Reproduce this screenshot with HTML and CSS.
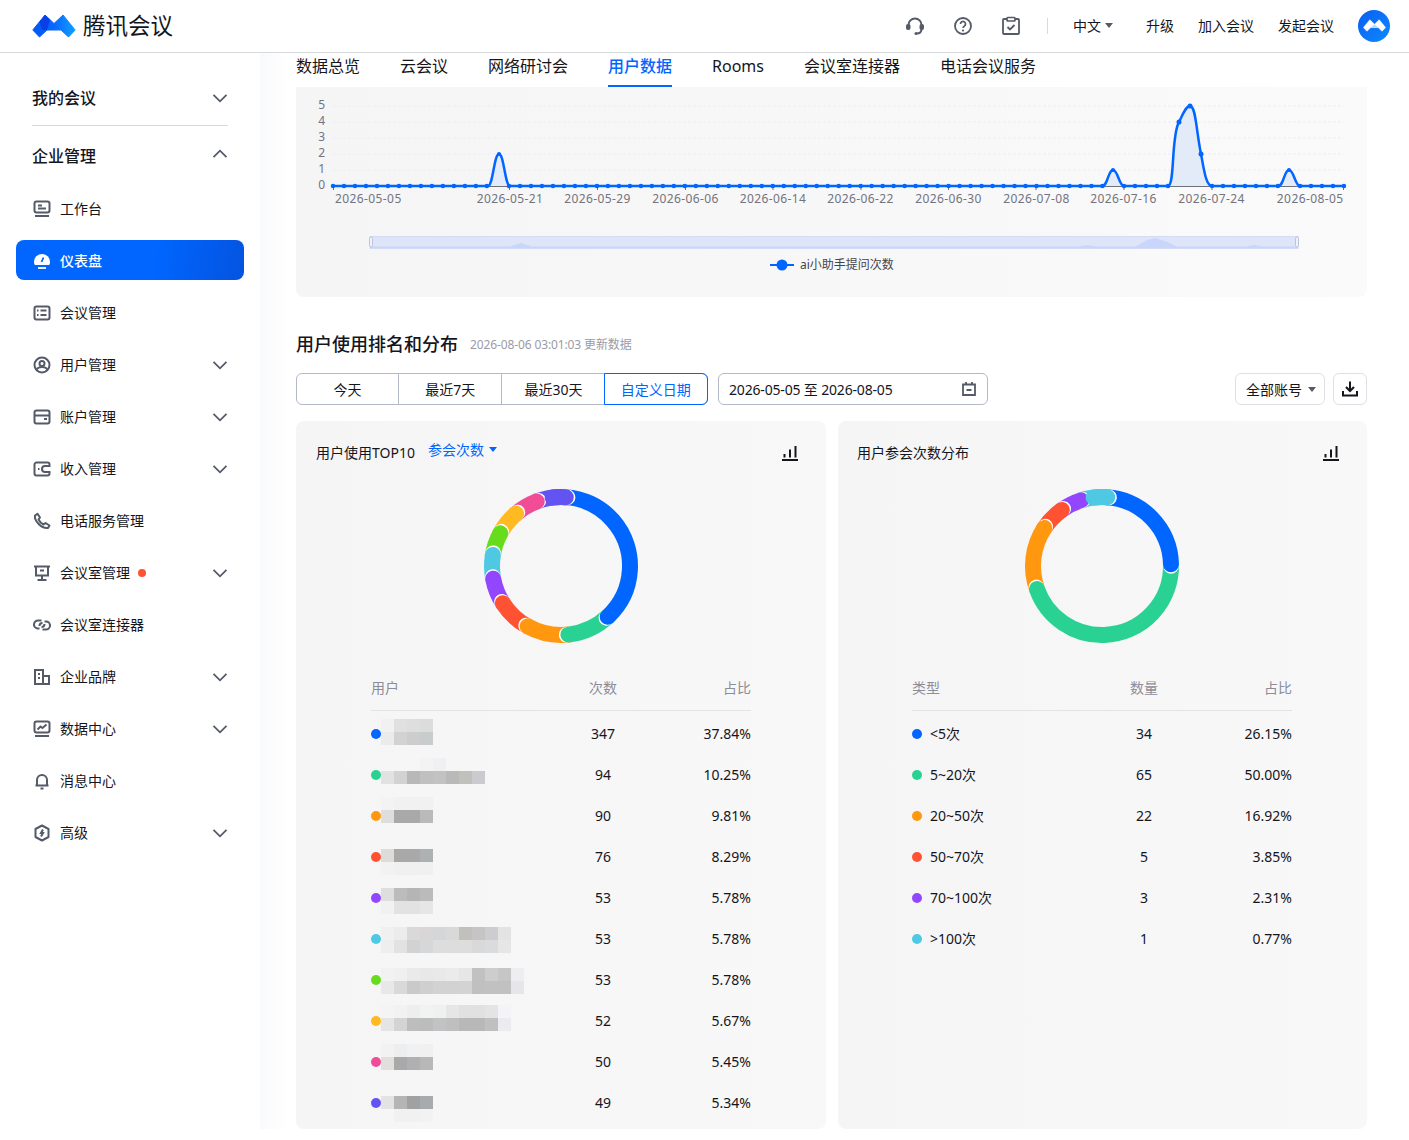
FILE: index.html
```html
<!DOCTYPE html>
<html lang="zh-CN">
<head>
    <meta charset="UTF-8">
    <meta name="viewport" content="width=device-width, initial-scale=1.0">
    <title>腾讯会议 - 仪表盘</title>
    <link rel="stylesheet" href="styles.css">
</head>
<body>
<header class="top-bar">
    <div class="brand">
        <svg class="brand-logo" viewBox="0 0 44 24">
            <defs>
                <linearGradient id="logoFill" x1="0" y1="0" x2="1" y2="0">
                    <stop offset="0" stop-color="#0058f5"/>
                    <stop offset="0.5" stop-color="#0a66ff"/>
                    <stop offset="1" stop-color="#10a0ff"/>
                </linearGradient>
            </defs>
            <path d="M.8 16 13 1 22 9.500 31 1 43.200 16 36.500 23 29 16H15L7.500 23Z" fill="url(#logoFill)" stroke="url(#logoFill)" stroke-linejoin="round"/>
            <path d="M13 1 7.500 8 10 16H15L18 5.500Z" fill="#0a3fe6"/>
        </svg>
        <span class="brand-name">腾讯会议</span>
    </div>
    <div class="top-actions">
        <svg class="top-icon" viewBox="0 0 20 20"><path d="M3.500 11V9a6.500 6.500 0 0 1 13 0v2M16.500 13c0 3-2 4.500-5 4.500" fill="none" stroke="#555a69" stroke-width="2"/><rect x="1" y="8" width="4.500" height="6" rx="2" fill="#555a69"/><rect x="14.500" y="8" width="4.500" height="6" rx="2" fill="#555a69"/><circle cx="11" cy="17.500" r="1.500" fill="#555a69"/></svg>
        <svg class="top-icon" viewBox="0 0 20 20"><circle cx="10" cy="10" r="8" fill="none" stroke="#555a69" stroke-width="1.800"/><path d="M7.500 8a2.500 2.500 0 1 1 3.800 2.100c-.9.6-1.300 1-1.300 2" fill="none" stroke="#555a69" stroke-width="1.700"/><circle cx="10" cy="14.500" r="1.100" fill="#555a69"/></svg>
        <svg class="top-icon" viewBox="0 0 20 20"><path d="M6 3H3a1 1 0 0 0-1 1v13a1 1 0 0 0 1 1h14a1 1 0 0 0 1-1V4a1 1 0 0 0-1-1h-3" fill="none" stroke="#555a69" stroke-width="1.800"/><rect x="6" y="1.500" width="8" height="3.500" rx=".8" fill="none" stroke="#555a69" stroke-width="1.700"/><path d="m6.500 11 2.500 2.500 4.500-4.500" fill="none" stroke="#555a69" stroke-width="1.800"/></svg>
        <span class="top-sep"></span>
        <span class="top-link lang">中文<i class="caret"></i></span>
        <span class="top-link">升级</span>
        <span class="top-link">加入会议</span>
        <span class="top-link">发起会议</span>
        <span class="avatar">
            <svg viewBox="0 0 44 24"><path d="M.8 16 13 1 22 9.500 31 1 43.200 16 36.500 23 29 16H15L7.500 23Z" fill="#fff" stroke="#fff" stroke-linejoin="round"/><path d="M15 16 22 9.500 29 16Z" fill="#b9d8ff"/></svg>
        </span>
    </div>
</header>

<div class="layout">
    <aside class="sidebar">
        <div class="nav-section">我的会议<svg class="chevron down" viewBox="0 0 16 10"><path d="m1.500 1.800 6.500 6.500 6.500-6.500"/></svg></div>
        <div class="nav-divider"></div>
        <div class="nav-section">企业管理<svg class="chevron up" viewBox="0 0 16 10"><path d="m1.500 8.200 6.500-6.500 6.500 6.500"/></svg></div>
        <ul class="nav-list">
            <li class="nav-item">
                <svg class="nav-icon" viewBox="0 0 18 18"><rect x="1.500" y="1.500" width="15" height="11" rx="2"/><path d="M5 5.500h4M5 8.500h8M2 16h14"/></svg>
                工作台
            </li>
            <li class="nav-item active">
                <svg class="nav-icon" viewBox="0 0 18 18"><path d="M1 10a8 8 0 0 1 16 0c0 1.500-.5 2.500-1 3H2c-.5-.5-1-1.500-1-3Z" fill="#fff" stroke="none"/><path d="M10.500 5.500 8.500 10" stroke="#0066ff" stroke-width="1.800"/><path d="M5 16h8" stroke="#fff" stroke-width="1.800"/></svg>
                仪表盘
            </li>
            <li class="nav-item">
                <svg class="nav-icon" viewBox="0 0 18 18"><rect x="1.500" y="2.500" width="15" height="13" rx="2"/><path d="M7.500 6.500h6M7.500 11h6M4 6.500h1.500M4 11h1.500"/></svg>
                会议管理
            </li>
            <li class="nav-item">
                <svg class="nav-icon" viewBox="0 0 18 18"><circle cx="9" cy="9" r="7.500"/><circle cx="9" cy="7.500" r="2.500"/><path d="M3.500 14c1-2.500 3-3 5.500-3s4.500.5 5.500 3"/></svg>
                用户管理<svg class="chevron" viewBox="0 0 16 10"><path d="m1.500 1.800 6.500 6.500 6.500-6.500"/></svg>
            </li>
            <li class="nav-item">
                <svg class="nav-icon" viewBox="0 0 18 18"><rect x="1.500" y="2.500" width="15" height="13" rx="2"/><path d="M2 7.500h14M11 11h3"/></svg>
                账户管理<svg class="chevron" viewBox="0 0 16 10"><path d="m1.500 1.800 6.500 6.500 6.500-6.500"/></svg>
            </li>
            <li class="nav-item">
                <svg class="nav-icon" viewBox="0 0 18 18"><path d="M16.500 6h-4.500a3 3 0 0 0 0 6h4.500v1.500a2 2 0 0 1-2 2h-11a2 2 0 0 1-2-2v-9a2 2 0 0 1 2-2h11a2 2 0 0 1 2 2Z"/><path d="M5 9h1.500"/></svg>
                收入管理<svg class="chevron" viewBox="0 0 16 10"><path d="m1.500 1.800 6.500 6.500 6.500-6.500"/></svg>
            </li>
            <li class="nav-item">
                <svg class="nav-icon" viewBox="0 0 18 18"><path d="M2 3.500 4.500 1.800 7 5.500 5.500 7.500c1 2 3 4 5 5l2-1.500 4 2.500-1.500 2.500c-6.500 1-14-7.500-13-12.500Z" stroke-linejoin="round"/></svg>
                电话服务管理
            </li>
            <li class="nav-item">
                <svg class="nav-icon" viewBox="0 0 18 18"><path d="M1 2.500h16M3 2.500v9h12v-9M9 11.500V15M4.500 16h9M7 6.500h4"/></svg>
                会议室管理<i class="red-dot"></i><svg class="chevron" viewBox="0 0 16 10"><path d="m1.500 1.800 6.500 6.500 6.500-6.500"/></svg>
            </li>
            <li class="nav-item">
                <svg class="nav-icon" viewBox="0 0 18 18"><path d="M8.500 4.500h-3a4 4 0 0 0-1 8h2M9.500 13.500h3a4 4 0 0 0 1-8h-2M6.500 10a3 3 0 0 1 3-3M11.500 8a3 3 0 0 1-3 3"/></svg>
                会议室连接器
            </li>
            <li class="nav-item">
                <svg class="nav-icon" viewBox="0 0 18 18"><path d="M2 2h8v14H2ZM10 8h6v8h-6M5 6h2M5 10h2"/></svg>
                企业品牌<svg class="chevron" viewBox="0 0 16 10"><path d="m1.500 1.800 6.500 6.500 6.500-6.500"/></svg>
            </li>
            <li class="nav-item">
                <svg class="nav-icon" viewBox="0 0 18 18"><rect x="1.500" y="1.500" width="15" height="11" rx="2"/><path d="m4.500 9.500 3-3 2 1.500 4-3.500M2 16h14"/></svg>
                数据中心<svg class="chevron" viewBox="0 0 16 10"><path d="m1.500 1.800 6.500 6.500 6.500-6.500"/></svg>
            </li>
            <li class="nav-item">
                <svg class="nav-icon" viewBox="0 0 18 18"><path d="M4 13V8a5 5 0 0 1 10 0v5M2.500 13.500h13M7.500 16.500h3"/></svg>
                消息中心
            </li>
            <li class="nav-item">
                <svg class="nav-icon" viewBox="0 0 18 18"><path d="M9 1.500 15.500 5v8L9 16.500 2.500 13V5Z" stroke-linejoin="round"/><path d="M10 5.500 8 9h2l-2 3.500"/></svg>
                高级<svg class="chevron" viewBox="0 0 16 10"><path d="m1.500 1.800 6.500 6.500 6.500-6.500"/></svg>
            </li>
        </ul>
    </aside>

    <main class="content">
        <nav class="tabs">
            <span class="tab">数据总览</span>
            <span class="tab">云会议</span>
            <span class="tab">网络研讨会</span>
            <span class="tab active">用户数据</span>
            <span class="tab">Rooms</span>
            <span class="tab">会议室连接器</span>
            <span class="tab">电话会议服务</span>
        </nav>

        <section class="trend-card">
            <svg class="trend-chart" viewBox="296 87 1071 210">
                <g class="grid-lines">
                    <path d="M333 106H1344M333 122H1344M333 138H1344M333 154H1344M333 170H1344"/>
                </g>
                <g class="axis-text">
                    <text x="325" y="109" text-anchor="end">5</text>
                    <text x="325" y="125" text-anchor="end">4</text>
                    <text x="325" y="141" text-anchor="end">3</text>
                    <text x="325" y="157" text-anchor="end">2</text>
                    <text x="325" y="173" text-anchor="end">1</text>
                    <text x="325" y="189" text-anchor="end">0</text>
                </g>
                <g class="axis-text date-labels">
                    <text x="335" y="203">2026-05-05</text>
                    <text x="510" y="203" text-anchor="middle">2026-05-21</text>
                    <text x="597.500" y="203" text-anchor="middle">2026-05-29</text>
                    <text x="685.500" y="203" text-anchor="middle">2026-06-06</text>
                    <text x="773" y="203" text-anchor="middle">2026-06-14</text>
                    <text x="860.500" y="203" text-anchor="middle">2026-06-22</text>
                    <text x="948.500" y="203" text-anchor="middle">2026-06-30</text>
                    <text x="1036.500" y="203" text-anchor="middle">2026-07-08</text>
                    <text x="1123.500" y="203" text-anchor="middle">2026-07-16</text>
                    <text x="1211.500" y="203" text-anchor="middle">2026-07-24</text>
                    <text x="1343.500" y="203" text-anchor="end">2026-08-05</text>
                </g>
                <path class="axis-line" d="M333 186.500H1344M333.500 186v4M509.500 186v4M597.500 186v4M685.500 186v4M773 186v4M861 186v4M948.500 186v4M1036 186v4M1124 186v4M1212 186v4M1343.500 186v4"/>
                <path class="trend-area" d="M488 186C493 186 494 154 499 154 504 154 505 186 510 186ZM1102 186C1108 186 1108 170 1113 170 1118 170 1119 186 1124 186ZM1168 186C1175 186 1171 135 1179 122 1183 114 1186 106 1190 106 1196 106 1196 130 1201 154 1204 170 1206 186 1212 186ZM1278 186C1284 186 1284 170 1289 170 1294 170 1295 186 1300 186Z"/>
                <path class="trend-line" d="M333 186H488C493 186 494 154 499 154 504 154 505 186 510 186H1102C1108 186 1108 170 1113 170 1118 170 1119 186 1124 186H1168C1175 186 1171 135 1179 122 1183 114 1186 106 1190 106 1196 106 1196 130 1201 154 1204 170 1206 186 1212 186H1278C1284 186 1284 170 1289 170 1294 170 1295 186 1300 186H1344"/>
                <path class="trend-dots" d="M333 186H487.500M509 186H1103M1124 186H1168.500M1212 186H1279M1300 186H1344.500"/>
                <g class="trend-peaks">
                    <circle cx="499" cy="154" r="2"/><circle cx="1113" cy="170" r="2"/><circle cx="1179" cy="122" r="2.500"/><circle cx="1190" cy="106" r="2.500"/><circle cx="1201" cy="154" r="2.500"/><circle cx="1289" cy="170" r="2"/>
                </g>
                <rect class="zoom-track" x="370" y="236.500" width="928" height="12"/>
                <path class="zoom-area" d="M370 246.500H510L521 243 532 246.500H1078L1087 245 1096 246.500H1136L1147 240 1155 238 1165 241 1177 246.500H1246L1254 245 1262 246.500H1298V248H370Z"/>
                <rect class="zoom-handle" x="369.500" y="237" width="3" height="10" rx="1.500"/>
                <rect class="zoom-handle" x="1295.500" y="237" width="3" height="10" rx="1.500"/>
                <path d="M770 265H794" stroke="#0066ff" stroke-width="2"/>
                <circle cx="782" cy="265" r="5.500" fill="#0066ff"/>
                <text class="legend-text" x="800" y="269">ai小助手提问次数</text>
            </svg>
        </section>

        <div class="section-head">
            <h2 class="section-title">用户使用排名和分布</h2>
            <span class="section-note">2026-08-06 03:01:03 更新数据</span>
        </div>

        <div class="toolbar">
            <div class="range-group">
                <span class="range-item">今天</span>
                <span class="range-item">最近7天</span>
                <span class="range-item">最近30天</span>
                <span class="range-item active">自定义日期</span>
            </div>
            <div class="date-box">
                <span class="date-value">2026-05-05 至 2026-08-05</span>
                <svg class="date-icon" viewBox="0 0 16 16"><path d="M2 3.500h12v10.500H2ZM5 1v3M11 1v3M5.500 9h5"/></svg>
            </div>
            <div class="account-select">全部账号<i class="caret"></i></div>
            <div class="download-btn">
                <svg viewBox="0 0 18 18"><path d="M9 1.500v9M5 7l4 4 4-4" fill="none" stroke="#15151c" stroke-width="2"/><path d="M2 11v4.500h14V11" fill="none" stroke="#15151c" stroke-width="2"/></svg>
            </div>
        </div>

        <div class="panels">
            <section class="panel">
                <div class="panel-head">
                    <span class="panel-title">用户使用TOP10</span>
                    <span class="panel-filter">参会次数<i class="caret"></i></span>
                    <svg class="panel-icon" viewBox="0 0 16 16"><path d="M0 15h16M2.500 12.500V9M8 12.500V4.500M13.500 12.500V1"/></svg>
                </div>
                <svg class="donut" viewBox="0 0 200 180">
                    <g fill="none" stroke-width="16" stroke-linecap="round">
                        <g transform="rotate(249 100 90)"><circle cx="100" cy="90" r="69" pathLength="360" stroke="#6353f2" stroke-dasharray="25 360"/></g>
                        <g transform="rotate(229 100 90)"><circle cx="100" cy="90" r="69" pathLength="360" stroke="#fff" stroke-dasharray="21.900 360"/><circle cx="100" cy="90" r="69" pathLength="360" stroke="#f04d96" stroke-dasharray="20.400 360"/></g>
                        <g transform="rotate(208 100 90)"><circle cx="100" cy="90" r="69" pathLength="360" stroke="#fff" stroke-dasharray="22.900 360"/><circle cx="100" cy="90" r="69" pathLength="360" stroke="#ffb921" stroke-dasharray="21.400 360"/></g>
                        <g transform="rotate(188.800 100 90)"><circle cx="100" cy="90" r="69" pathLength="360" stroke="#fff" stroke-dasharray="21.100 360"/><circle cx="100" cy="90" r="69" pathLength="360" stroke="#66dc1c" stroke-dasharray="19.600 360"/></g>
                        <g transform="rotate(169 100 90)"><circle cx="100" cy="90" r="69" pathLength="360" stroke="#fff" stroke-dasharray="21.700 360"/><circle cx="100" cy="90" r="69" pathLength="360" stroke="#4fc9e3" stroke-dasharray="20.200 360"/></g>
                        <g transform="rotate(147 100 90)"><circle cx="100" cy="90" r="69" pathLength="360" stroke="#fff" stroke-dasharray="23.900 360"/><circle cx="100" cy="90" r="69" pathLength="360" stroke="#9247ff" stroke-dasharray="22.400 360"/></g>
                        <g transform="rotate(118.600 100 90)"><circle cx="100" cy="90" r="69" pathLength="360" stroke="#fff" stroke-dasharray="30.300 360"/><circle cx="100" cy="90" r="69" pathLength="360" stroke="#ff5233" stroke-dasharray="28.800 360"/></g>
                        <g transform="rotate(83.500 100 90)"><circle cx="100" cy="90" r="69" pathLength="360" stroke="#fff" stroke-dasharray="37 360"/><circle cx="100" cy="90" r="69" pathLength="360" stroke="#ff970f" stroke-dasharray="35.500 360"/></g>
                        <g transform="rotate(47 100 90)"><circle cx="100" cy="90" r="69" pathLength="360" stroke="#fff" stroke-dasharray="38.400 360"/><circle cx="100" cy="90" r="69" pathLength="360" stroke="#29d192" stroke-dasharray="36.900 360"/></g>
                        <g transform="rotate(-86.400 100 90)"><circle cx="100" cy="90" r="69" pathLength="360" stroke="#fff" stroke-dasharray="135.300 360"/><circle cx="100" cy="90" r="69" pathLength="360" stroke="#0066ff" stroke-dasharray="133.800 360"/></g>
                        <g transform="rotate(-86.400 100 90)"><circle cx="100" cy="90" r="69" pathLength="360" stroke="#fff" stroke-dasharray="2 360"/></g>
                        <g transform="rotate(-97 100 90)"><circle cx="100" cy="90" r="69" pathLength="360" stroke="#6353f2" stroke-dasharray="11 360"/></g>
                    </g>
                </svg>
                <div class="rank-table">
                    <div class="rank-row rank-head"><span>用户</span><span class="num">次数</span><span class="pct">占比</span></div>
                    <div class="rank-row"><span class="who"><i class="dot blue"></i><i class="mosaic w4 m1"></i></span><span class="num">347</span><span class="pct">37.84%</span></div>
                    <div class="rank-row"><span class="who"><i class="dot green"></i><i class="mosaic w8 m2"></i></span><span class="num">94</span><span class="pct">10.25%</span></div>
                    <div class="rank-row"><span class="who"><i class="dot orange"></i><i class="mosaic w4 m3"></i></span><span class="num">90</span><span class="pct">9.81%</span></div>
                    <div class="rank-row"><span class="who"><i class="dot red"></i><i class="mosaic w4 m4"></i></span><span class="num">76</span><span class="pct">8.29%</span></div>
                    <div class="rank-row"><span class="who"><i class="dot purple"></i><i class="mosaic w4 m5"></i></span><span class="num">53</span><span class="pct">5.78%</span></div>
                    <div class="rank-row"><span class="who"><i class="dot cyan"></i><i class="mosaic w10 m6"></i></span><span class="num">53</span><span class="pct">5.78%</span></div>
                    <div class="rank-row"><span class="who"><i class="dot lime"></i><i class="mosaic w11 m7"></i></span><span class="num">53</span><span class="pct">5.78%</span></div>
                    <div class="rank-row"><span class="who"><i class="dot yellow"></i><i class="mosaic w10 m8"></i></span><span class="num">52</span><span class="pct">5.67%</span></div>
                    <div class="rank-row"><span class="who"><i class="dot pink"></i><i class="mosaic w4 m9"></i></span><span class="num">50</span><span class="pct">5.45%</span></div>
                    <div class="rank-row"><span class="who"><i class="dot indigo"></i><i class="mosaic w4 m10"></i></span><span class="num">49</span><span class="pct">5.34%</span></div>
                </div>
            </section>

            <section class="panel">
                <div class="panel-head">
                    <span class="panel-title">用户参会次数分布</span>
                    <svg class="panel-icon" viewBox="0 0 16 16"><path d="M0 15h16M2.500 12.500V9M8 12.500V4.500M13.500 12.500V1"/></svg>
                </div>
                <svg class="donut" viewBox="0 0 200 180">
                    <g fill="none" stroke-width="16" stroke-linecap="round">
                        <g transform="rotate(252 100 90)"><circle cx="100" cy="90" r="69" pathLength="360" stroke="#4fc9e3" stroke-dasharray="22.400 360"/></g>
                        <g transform="rotate(234 100 90)"><circle cx="100" cy="90" r="69" pathLength="360" stroke="#fff" stroke-dasharray="19.900 360"/><circle cx="100" cy="90" r="69" pathLength="360" stroke="#9247ff" stroke-dasharray="18.400 360"/></g>
                        <g transform="rotate(213 100 90)"><circle cx="100" cy="90" r="69" pathLength="360" stroke="#fff" stroke-dasharray="22.900 360"/><circle cx="100" cy="90" r="69" pathLength="360" stroke="#ff5233" stroke-dasharray="21.400 360"/></g>
                        <g transform="rotate(160 100 90)"><circle cx="100" cy="90" r="69" pathLength="360" stroke="#fff" stroke-dasharray="54.900 360"/><circle cx="100" cy="90" r="69" pathLength="360" stroke="#ff970f" stroke-dasharray="53.400 360"/></g>
                        <g transform="rotate(-2 100 90)"><circle cx="100" cy="90" r="69" pathLength="360" stroke="#fff" stroke-dasharray="163.900 360"/><circle cx="100" cy="90" r="69" pathLength="360" stroke="#29d192" stroke-dasharray="162.400 360"/></g>
                        <g transform="rotate(-86 100 90)"><circle cx="100" cy="90" r="69" pathLength="360" stroke="#fff" stroke-dasharray="85.900 360"/><circle cx="100" cy="90" r="69" pathLength="360" stroke="#0066ff" stroke-dasharray="84.400 360"/></g>
                        <g transform="rotate(-86 100 90)"><circle cx="100" cy="90" r="69" pathLength="360" stroke="#fff" stroke-dasharray="2 360"/></g>
                        <g transform="rotate(-97 100 90)"><circle cx="100" cy="90" r="69" pathLength="360" stroke="#4fc9e3" stroke-dasharray="11.400 360"/></g>
                    </g>
                </svg>
                <div class="rank-table">
                    <div class="rank-row rank-head"><span>类型</span><span class="num">数量</span><span class="pct">占比</span></div>
                    <div class="rank-row"><span class="who"><i class="dot blue"></i><span class="type-name">&lt;5次</span></span><span class="num">34</span><span class="pct">26.15%</span></div>
                    <div class="rank-row"><span class="who"><i class="dot green"></i><span class="type-name">5~20次</span></span><span class="num">65</span><span class="pct">50.00%</span></div>
                    <div class="rank-row"><span class="who"><i class="dot orange"></i><span class="type-name">20~50次</span></span><span class="num">22</span><span class="pct">16.92%</span></div>
                    <div class="rank-row"><span class="who"><i class="dot red"></i><span class="type-name">50~70次</span></span><span class="num">5</span><span class="pct">3.85%</span></div>
                    <div class="rank-row"><span class="who"><i class="dot purple"></i><span class="type-name">70~100次</span></span><span class="num">3</span><span class="pct">2.31%</span></div>
                    <div class="rank-row"><span class="who"><i class="dot cyan"></i><span class="type-name">&gt;100次</span></span><span class="num">1</span><span class="pct">0.77%</span></div>
                </div>
            </section>
        </div>
    </main>
</div>
</body>
</html>
```

FILE: styles.css
```css
* {
    margin: 0;
    padding: 0;
    box-sizing: border-box;
}

body {
    font-family: "Noto Sans", "Noto Sans CJK SC", sans-serif;
    font-size: 14px;
    color: #15151c;
    background: #fff;
    height: 1140px;
    overflow: hidden;
}

i {
    font-style: normal;
}

/* top bar */
.top-bar {
    display: flex;
    align-items: center;
    justify-content: space-between;
    height: 53px;
    padding: 0 19px 1px 32px;
    border-bottom: 1px solid #d8d9dd;
}

.brand {
    display: flex;
    align-items: center;
    gap: 7px;
}

.brand-logo {
    width: 44px;
    height: 24px;
}

.brand-name {
    font-size: 22.5px;
    line-height: 30px;
}

.top-actions {
    display: flex;
    align-items: center;
}

.top-icon {
    width: 20px;
    height: 20px;
    margin-right: 28px;
}

.top-sep {
    width: 1px;
    height: 16px;
    background: #d8d9dd;
    margin: 0 25px 0 -2px;
}

.top-link {
    margin-right: 24px;
    line-height: 20px;
}

.lang {
    display: flex;
    align-items: center;
    gap: 4px;
    margin-right: 33px;
}

.caret {
    display: inline-block;
    width: 0;
    height: 0;
    border-left: 4.5px solid transparent;
    border-right: 4.5px solid transparent;
    border-top: 5px solid #555a69;
}

.avatar {
    display: flex;
    align-items: center;
    justify-content: center;
    width: 32px;
    height: 32px;
    border-radius: 50%;
    background: linear-gradient(135deg, #0a5cf0 0%, #0d8bff 100%);
}

.avatar svg {
    width: 23px;
    height: 13px;
}

.layout {
    display: flex;
}

/* sidebar */
.sidebar {
    width: 260px;
    flex-shrink: 0;
    padding-top: 23px;
}

.nav-section {
    display: flex;
    align-items: center;
    justify-content: space-between;
    height: 44px;
    padding: 0 32px 2px;
    font-size: 16px;
    font-weight: 500;
}

.chevron {
    width: 16px;
    height: 10px;
    fill: none;
    stroke: #555a69;
    stroke-width: 1.8;
}

.chevron.down {
    margin-top: 2px;
}

.chevron.up {
    margin-top: -2px;
}

.nav-divider {
    height: 1px;
    background: #d8d9dd;
    margin: 5px 32px 8px;
}

.nav-list {
    list-style: none;
    margin-top: 10px;
}

.nav-item {
    display: flex;
    align-items: center;
    height: 40px;
    margin: 0 16px 12px;
    padding: 2px 16px 0 17px;
    border-radius: 8px;
    line-height: 20px;
}

.nav-item .chevron {
    margin-left: auto;
}

.nav-item.active {
    color: #fff;
    font-weight: 500;
    background: linear-gradient(100deg, #0066ff 60%, #0454e0 100%);
}

.nav-icon {
    width: 18px;
    height: 18px;
    margin-right: 9px;
    fill: none;
    stroke: #555a69;
    stroke-width: 2;
    flex-shrink: 0;
}

.red-dot {
    width: 8px;
    height: 8px;
    margin-left: 8px;
    border-radius: 50%;
    background: #ff5233;
}

/* main content */
.content {
    flex: 1;
    min-width: 0;
    padding: 0 42px 0 36px;
    background: linear-gradient(90deg, #f9fafc 0, #fff 30px);
}

.tabs {
    display: flex;
    gap: 40px;
    height: 34px;
    font-size: 16px;
    line-height: 26px;
}

.tab.active {
    color: #0066ff;
    font-weight: 500;
    border-bottom: 2px solid #0066ff;
}

.trend-card {
    height: 210px;
    border-radius: 0 0 8px 8px;
    background: linear-gradient(90deg, #f5f5f6 0%, #fafafa 100%);
}

.trend-chart {
    display: block;
    width: 1071px;
    height: 210px;
}

.grid-lines path {
    fill: none;
    stroke: #eceef8;
    stroke-dasharray: 3 2;
}

.axis-text text {
    font-size: 12px;
    fill: #73737f;
}

.date-labels text {
    letter-spacing: 0.4px;
}

.axis-line {
    fill: none;
    stroke: #6e7079;
    stroke-width: 1;
}

.trend-area {
    fill: #e3ebf9;
}

.trend-line {
    fill: none;
    stroke: #0066ff;
    stroke-width: 2.5;
}

.trend-dots {
    fill: none;
    stroke: #0066ff;
    stroke-width: 4.5;
    stroke-linecap: round;
    stroke-dasharray: 0 10.99;
}

.trend-peaks {
    fill: #0066ff;
}

.zoom-track {
    fill: #dfe5f8;
    stroke: #d4dcf5;
}

.zoom-area {
    fill: #c9d6fb;
}

.zoom-handle {
    fill: #f0f2f8;
    stroke: #b9c4dc;
}

.legend-text {
    font-size: 12px;
    fill: #44444f;
}

.section-head {
    display: flex;
    align-items: center;
    gap: 12px;
    margin-top: 34px;
    height: 26px;
}

.section-title {
    margin-top: -2px;
    font-size: 18px;
    font-weight: 500;
}

.section-note {
    font-size: 12px;
    color: #9b9ba6;
    letter-spacing: -0.12px;
}

.toolbar {
    display: flex;
    align-items: stretch;
    height: 32px;
    margin-top: 16px;
}

.range-group {
    display: flex;
    width: 412px;
    border: 1px solid #b4b9c8;
    border-radius: 6px;
}

.range-item {
    flex: 1;
    display: flex;
    align-items: center;
    justify-content: center;
    border-left: 1px solid #b4b9c8;
}

.range-item:first-child {
    flex: 0 0 101px;
    border-left: none;
}

.range-item.active {
    margin: -1px;
    color: #0066ff;
    border: 1px solid #0066ff;
    border-radius: 0 6px 6px 0;
}

.date-box {
    display: flex;
    align-items: center;
    justify-content: space-between;
    width: 270px;
    margin-left: 10px;
    padding: 0 10px;
    border: 1px solid #b4b9c8;
    border-radius: 6px;
}

.date-value {
    letter-spacing: -0.17px;
}

.date-icon {
    width: 16px;
    height: 16px;
    fill: none;
    stroke: #555a69;
    stroke-width: 1.8;
}

.account-select {
    display: flex;
    align-items: center;
    gap: 6px;
    margin-left: auto;
    padding: 0 8px 0 10px;
    border: 1px solid #dfe0e6;
    border-radius: 6px;
}

.download-btn {
    display: flex;
    align-items: center;
    justify-content: center;
    width: 34px;
    margin-left: 8px;
    border: 1px solid #dfe0e6;
    border-radius: 6px;
}

.download-btn svg {
    width: 18px;
    height: 18px;
}

/* panels */
.panels {
    display: grid;
    grid-template-columns: 530px 529px;
    gap: 12px;
    margin-top: 16px;
}

.panel {
    height: 708px;
    padding: 20px 75px 0;
    border-radius: 8px;
    background: linear-gradient(90deg, #f5f5f6 0%, #f8f8f8 100%);
}

.panel + .panel {
    padding-left: 74px;
}

.panel-head {
    display: flex;
    align-items: center;
    height: 24px;
    margin: 0 -47px 0 -55px;
}

.panel-title {
    line-height: 24px;
}

.panel-filter {
    display: flex;
    align-items: center;
    gap: 5px;
    margin: -8px 0 0 13px;
    color: #0066ff;
}

.panel-filter .caret {
    border-top-color: #0066ff;
}

.panel-icon {
    width: 16px;
    height: 16px;
    margin-left: auto;
    fill: none;
    stroke: #15151c;
    stroke-width: 2;
}

.donut {
    display: block;
    width: 200px;
    height: 180px;
    margin: 11px auto 0;
}

.donut circle[stroke="#fff"] {
    stroke-width: 15.5;
}

.rank-table {
    margin-top: 9px;
}

.rank-row {
    display: grid;
    grid-template-columns: 204px 56px 1fr;
    align-items: center;
    height: 41px;
}

.rank-head {
    height: 46px;
    margin-bottom: 2px;
    padding-bottom: 2px;
    color: #8d8d99;
    border-bottom: 1px solid #e3e4e8;
}

.num {
    text-align: center;
}

.pct {
    text-align: right;
}

.who {
    display: flex;
    align-items: center;
}

.dot {
    width: 10px;
    height: 10px;
    border-radius: 50%;
    flex-shrink: 0;
}

.blue { background: #0066ff; }
.green { background: #29d192; }
.orange { background: #ff970f; }
.red { background: #ff5233; }
.purple { background: #9247ff; }
.cyan { background: #4fc9e3; }
.lime { background: #66dc1c; }
.yellow { background: #ffb921; }
.pink { background: #f04d96; }
.indigo { background: #6353f2; }

.type-name {
    margin: -2px 0 0 8px;
}

/* 打码的用户名 */
.mosaic {
    display: block;
    height: 26px;
    background-repeat: no-repeat;
    background-size: 100% 13px;
    background-position: 0 0, 0 13px;
}

.w4 { width: 52px; }
.w8 { width: 104px; }
.w10 { width: 130px; }
.w11 { width: 143px; }

.m1 {
    margin-bottom: 4px;
    background-image:
        linear-gradient(90deg, #f1f1f1 0 13px, #e0e0e0 13px 26px, #dedede 26px 39px, #dcdcdc 39px),
        linear-gradient(90deg, #ebebeb 0 13px, #d2d2d2 13px 26px, #cdcdcd 26px 39px, #c9cccd 39px);
}

.m2 {
    margin-bottom: 8px;
    background-image:
        linear-gradient(90deg, #f6f6f6 0 39px, #f3f3f4 39px 52px, #f0f0f2 52px 65px, #f6f6f6 65px),
        linear-gradient(90deg, #e2e2e2 0 13px, #d2d2d2 13px 26px, #b8b8b9 26px 39px, #c0c0c1 39px 52px, #c2c2c3 52px 65px, #b9b9b9 65px 78px, #c0c0bd 78px 91px, #cacacf 91px);
}

.m3 {
    margin-bottom: 12px;
    background-image:
        linear-gradient(90deg, #f3f3f3 0 13px, #f1f1f1 13px),
        linear-gradient(90deg, #dededc 0 13px, #a9a9a9 13px 39px, #bababa 39px);
}

.m4 {
    margin-top: 10px;
    background-image:
        linear-gradient(90deg, #dedcda 0 13px, #a9a9a9 13px 39px, #aeb1b1 39px),
        linear-gradient(90deg, #f2f2f2 0 13px, #f0f0f0 13px);
}

.m5 {
    margin-top: 6px;
    background-image:
        linear-gradient(90deg, #dfdedd 0 13px, #bcbcbc 13px 26px, #b5b5b5 26px 39px, #bbbbbb 39px),
        linear-gradient(90deg, #f1f1f1 0 13px, #e2e2e2 13px 39px, #e6e6e6 39px);
}

.m6 {
    margin-top: 2px;
    background-image:
        linear-gradient(90deg, #f0f0f0 0 13px, #ececec 13px 26px, #d9d9d9 26px 39px, #d8d6d6 39px 52px, #d5d6d8 52px 65px, #d9d9d9 65px 78px, #c1c0bd 78px 91px, #c5c5c5 91px 104px, #cdcdcf 104px 117px, #e3e3e4 117px),
        linear-gradient(90deg, #eeeeee 0 13px, #e2e2e2 13px 26px, #d2d2d2 26px 39px, #d6d7d8 39px 52px, #dddddd 52px 91px, #d9d9d9 91px 104px, #dadbdc 104px 117px, #e6e6e6 117px);
}

.m7 {
    margin-top: 2px;
    background-image:
        linear-gradient(90deg, #f2f2f2 0 13px, #f0f0f0 13px 26px, #eaeaea 26px 39px, #e8e8e8 39px 52px, #e9e9e9 52px 65px, #ebebeb 65px 78px, #e6e6e6 78px 91px, #c0c1c1 91px 104px, #cdcdcd 104px 117px, #c6c6c6 117px 130px, #eeeef0 130px),
        linear-gradient(90deg, #e8e8e8 0 13px, #d9d9d9 13px 26px, #c9cacc 26px 39px, #cfcfcf 39px 52px, #d2d2d2 52px 78px, #d3d3d5 78px 91px, #c0c0c0 91px 104px, #c1c1c1 104px 130px, #e6e6ea 130px);
}

.m8 {
    margin-bottom: 6px;
    background-image:
        linear-gradient(90deg, #f4f4f4 0 13px, #f2f2f2 13px 26px, #eeeeee 26px 39px, #f1f2f2 39px 52px, #eff0f0 52px 65px, #e6e6e6 65px 78px, #e1e1e1 78px 104px, #e4e4e4 104px 117px, #f4f4f6 117px),
        linear-gradient(90deg, #e6e4e4 0 13px, #d4d4d4 13px 26px, #bdbdbe 26px 39px, #bcbcbc 39px 52px, #c2c2c4 52px 65px, #bfbfbf 65px 78px, #b7b8b7 78px 104px, #c0c0c0 104px 117px, #ececf0 117px);
}

.m9 {
    margin-bottom: 10px;
    background-image:
        linear-gradient(90deg, #f2f2f2 0 13px, #eceef0 13px 26px, #f1f1f1 26px 39px, #f0f0f0 39px),
        linear-gradient(90deg, #e2dedd 0 13px, #a9a9a9 13px 26px, #b0b0b2 26px 39px, #b8b8b8 39px);
}

.m10 {
    margin-top: 12px;
    background-image:
        linear-gradient(90deg, #e3e3e3 0 13px, #b5b5b5 13px 26px, #a1a1a1 26px 39px, #a8abae 39px),
        linear-gradient(90deg, #f6f6f6 0 13px, #f1f1f1 13px 39px, #f2f2f2 39px);
}
```
